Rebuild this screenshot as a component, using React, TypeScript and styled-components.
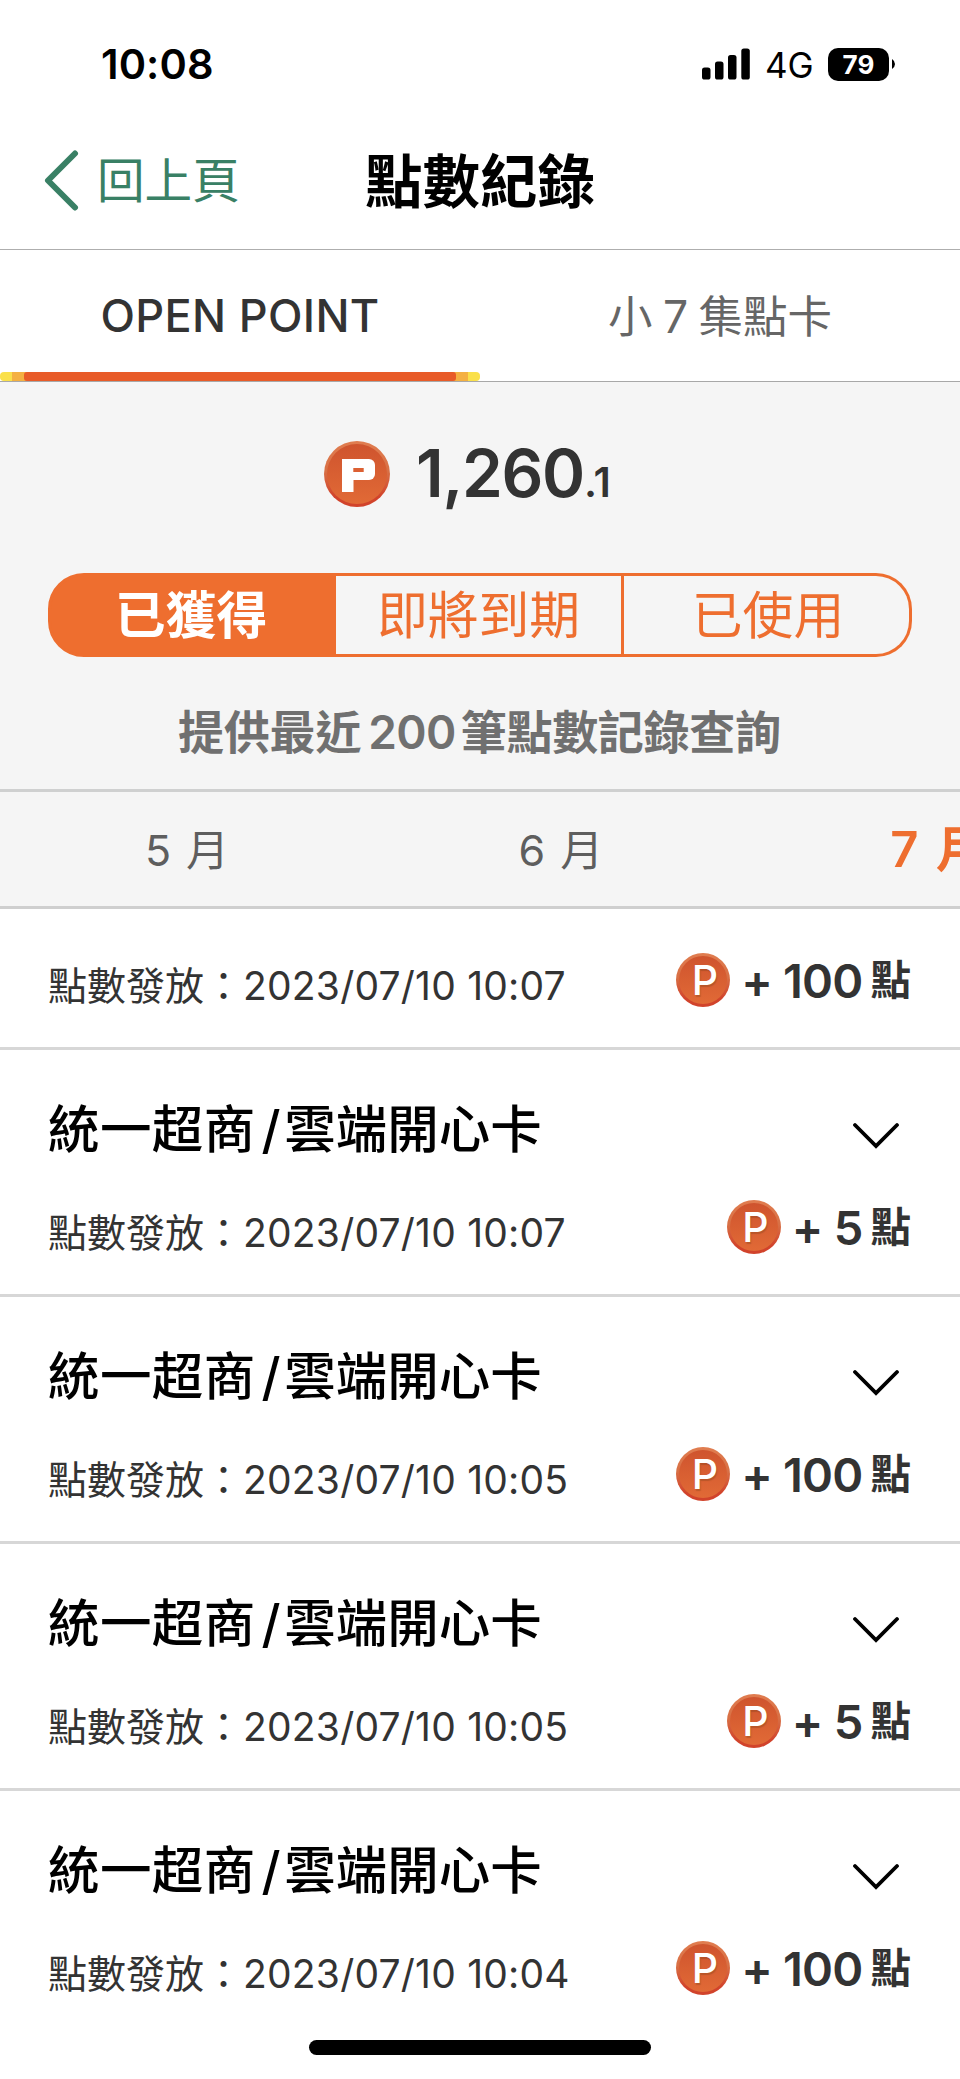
import React from "react";
import styled, { createGlobalStyle } from "styled-components";

const GlobalStyle = createGlobalStyle`
  body { margin: 0; background: #fff; }
  * { box-sizing: border-box; }
`;

const Screen = styled.main`
  display: flex;
  flex-direction: column;
  width: 960px;
  height: 2079px;
  overflow: hidden;
  background: #fff;
  color: #333;
  font-family: Inter, "Noto Sans CJK TC", sans-serif;
  white-space: nowrap;
`;

const Text = styled.span<{ $track?: number; $size?: number; $gap?: number }>`
  letter-spacing: ${(p) => p.$track ?? 0}px;
  margin-left: ${(p) => p.$gap ?? 0}px;
  line-height: 1;
  ${(p) => (p.$size ? `font-size: ${p.$size}px;` : "")}
`;

const StatusBar = styled.div`
  flex: none;
  display: flex;
  justify-content: space-between;
  height: 128px;
  padding: 0 65px 0 101px;
  align-items: center;
  color: #000;
`;

const Clock = styled.time`
  font-size: 41.5px;
  font-weight: 600;
  letter-spacing: 0.1px;
  line-height: 60px;
`;

const StatusIcons = styled.div`
  display: flex;
  align-items: center;
`;

const Network = styled.span`
  width: 63px;
  margin-left: 15px;
  font-size: 35px;
  line-height: 40px;
  padding-top: 2px;
`;

const Battery = styled.div`
  width: 61px;
  height: 33px;
  border-radius: 10px;
  background: #000;
  color: #fff;
  font-size: 26px;
  font-weight: 700;
  line-height: 34px;
  text-align: center;
`;

const Header = styled.header`
  flex: none;
  display: grid;
  grid-template-columns: 1fr auto 1fr;
  align-items: center;
  height: 122px;
  padding: 0 44px 16px;
  border-bottom: 1px solid #aeaeae;
`;

const BackButton = styled.div`
  display: flex;
  align-items: center;
  gap: 17px;
  color: #398065;
  font-size: 47.6px;
  line-height: 62px;
`;

const Title = styled.h1`
  margin: 2px 0 0;
  color: #000;
  font-size: 57.5px;
  font-weight: 700;
  line-height: 70px;
`;

const Tabs = styled.nav`
  flex: none;
  display: flex;
  height: 132px;
  border-bottom: 1px solid #a8a8a8;
`;

const Tab = styled.div<{ $active?: boolean }>`
  flex: 1;
  display: flex;
  flex-direction: column;
  font-size: ${(p) => (p.$active ? 45 : 44.5)}px;
  font-weight: ${(p) => (p.$active ? 500 : 400)};
  letter-spacing: ${(p) => (p.$active ? 0.35 : 0)}px;
  word-spacing: ${(p) => (p.$active ? 0 : -2)}px;
  color: ${(p) => (p.$active ? "#333" : "#666")};
  line-height: ${(p) => (p.$active ? 132 : 134)}px;
  text-align: center;
`;

const TabLabel = styled.span`
  height: 122px;
`;

const Underline = styled.div`
  height: 9px;
  padding: 0 12px;
  border-radius: 4px;
  background: #fae04a;
`;

const UnderlineMid = styled.div`
  height: 9px;
  padding: 0 12px;
  background: #f4b042;
`;

const UnderlineCore = styled.div`
  height: 9px;
  border-radius: 3px;
  background: #e85b28;
`;

const Summary = styled.section`
  flex: none;
  height: 410px;
  background: #f5f5f5;
  border-bottom: 3px solid #cfd0d0;
  display: flex;
  flex-direction: column;
`;

const Balance = styled.div`
  display: flex;
  align-items: center;
  height: 66px;
  margin: 59px 0 66px 324px;
  font-size: 65.5px;
  font-weight: 600;
  line-height: 68px;
`;

const BalanceValue = styled.div`
  margin-left: 26px;
  letter-spacing: -1.3px;
`;

const Segments = styled.div`
  flex: none;
  display: flex;
  height: 84px;
  margin: 0 48px;
`;

const Segment = styled.div<{ $active?: boolean }>`
  width: 288px;
  border: 3px solid #ee6e2f;
  background: ${(p) => (p.$active ? "#ee6e2f" : "transparent")};
  color: ${(p) => (p.$active ? "#fff" : "#ee6e2f")};
  font-size: 50.8px;
  font-weight: ${(p) => (p.$active ? 700 : 400)};
  line-height: 79px;
  text-align: center;
  &:first-child { border-radius: 36px 0 0 36px; padding-right: 2px; }
  &:last-child { border-radius: 0 36px 36px 0; padding-left: 3px; }
  & + & { border-left: 0; }
`;

const Note = styled.p`
  margin: 42px 0 0 178px;
  color: #707070;
  font-size: 46px;
  font-weight: 600;
  line-height: 66px;
`;

const Months = styled.div`
  flex: none;
  display: flex;
  height: 117px;
  background: #f5f5f5;
  border-bottom: 3px solid #cfcfcf;
  overflow: hidden;
`;

const Month = styled.div<{ $active?: boolean }>`
  flex: none;
  width: 374px;
  padding-left: ${(p) => (p.$active ? 5 : 0)}px;
  color: ${(p) => (p.$active ? "#ee6e2f" : "#5e5e5e")};
  font-size: ${(p) => (p.$active ? 49 : 43)}px;
  font-weight: ${(p) => (p.$active ? 600 : 400)};
  word-spacing: ${(p) => (p.$active ? 5 : 3)}px;
  line-height: 116px;
  text-align: center;
`;

const List = styled.ul`
  flex: none;
  margin: 0;
  padding: 6px 0 0;
  list-style: none;
`;

const Row = styled.li`
  padding: 0 48px 35px;
  border-bottom: 3px solid #d7d7d7;
  &:last-child { border-bottom: 0; }
`;

const Heading = styled.div`
  display: flex;
  justify-content: space-between;
  align-items: center;
  height: 112px;
  padding-top: 46px;
  color: #000;
  font-size: 51.5px;
  font-weight: 500;
  line-height: 66px;
`;

const Meta = styled.div`
  display: flex;
  justify-content: space-between;
  height: 97px;
  padding-top: 33px;
`;

const Issued = styled.div`
  padding-top: 6px;
  font-size: 39px;
  line-height: 64px;
`;

const Amount = styled.div`
  display: flex;
  align-items: center;
  padding-right: 1px;
  font-size: 47px;
  font-weight: 600;
  line-height: 64px;
`;

const Unit = styled.span`
  margin-left: 8px;
  padding-top: 2px;
  font-size: 40.5px;
  line-height: 1;
`;

const Coin = styled.div`
  display: flex;
  width: 54px;
  height: 54px;
  padding: 3px;
  border-radius: 50%;
  background: linear-gradient(#e07d50, #d87045 45%, #d1432b 85%);
`;

const CoinFace = styled.div`
  flex: 1;
  padding-left: 12.5px;
  border-radius: 50%;
  background: linear-gradient(#cf542e, #e16a36);
  color: #fff;
  font-size: 41px;
  font-weight: 500;
  line-height: 48px;
  text-shadow: 1px 2px 1px rgba(110, 60, 20, 0.3);
`;

const HomeIndicator = styled.div`
  flex: none;
  width: 342px;
  height: 15px;
  margin: 5px auto 0;
  border-radius: 8px;
  background: #000;
`;

const Signal = () => (
  <svg width="48" height="32" viewBox="0 0 48 32">
    <rect x="0" y="19.5" width="8.5" height="12" rx="2.6" />
    <rect x="13" y="13.5" width="8.5" height="18" rx="2.6" />
    <rect x="26" y="7" width="8.5" height="24.5" rx="2.6" />
    <rect x="39.3" y="0.5" width="8.5" height="31" rx="2.6" />
  </svg>
);

const BatteryTip = () => (
  <svg width="6" height="12" viewBox="0 0 6 12">
    <path d="M3 1 Q6 3 6 6 Q6 9 3 11 Z" />
  </svg>
);

const BackArrow = () => (
  <svg width="36" height="62" viewBox="0 0 36 62" fill="none" stroke="currentColor" strokeWidth="6" strokeLinecap="round" strokeLinejoin="round">
    <path d="M31 3.5 L4 30.5 L31 57.5" />
  </svg>
);

const Chevron = () => (
  <svg width="59" height="52" viewBox="0 0 59 52" fill="none" stroke="#000" strokeWidth="3.8" strokeLinecap="round">
    <path d="M2 22 L23 43 L44 22" />
  </svg>
);

const PointLogo = () => (
  <svg width="66" height="66" viewBox="0 0 66 66">
    <defs>
      <linearGradient id="rim" x1="0" y1="0" x2="0" y2="1">
        <stop offset="0" stopColor="#e07d50" />
        <stop offset="0.45" stopColor="#d87045" />
        <stop offset="0.85" stopColor="#d1432b" />
      </linearGradient>
      <linearGradient id="face" x1="0" y1="0" x2="0" y2="1">
        <stop offset="0" stopColor="#cf542e" />
        <stop offset="1" stopColor="#e16a36" />
      </linearGradient>
    </defs>
    <circle cx="33" cy="33" r="33" fill="url(#rim)" />
    <circle cx="33" cy="33" r="30" fill="url(#face)" />
    <rect x="18" y="18" width="33" height="21" rx="6" fill="#fff" />
    <rect x="18" y="18" width="11.5" height="33" fill="#fff" />
    <rect x="29.3" y="27" width="10.4" height="4" fill="#dc6033" />
  </svg>
);

interface Entry {
  time: string;
  points: number;
  partial?: boolean;
}

const entries: Entry[] = [
  { time: "10:07", points: 100, partial: true },
  { time: "10:07", points: 5 },
  { time: "10:05", points: 100 },
  { time: "10:05", points: 5 },
  { time: "10:04", points: 100 },
];

const HistoryRow = ({ time, points, partial }: Entry) => (
  <Row>
    {!partial && (
      <Heading>
        <div>
          <Text $track={0.4}>統一超商</Text>
          <Text $gap={6} $track={3.5}>/</Text>
          <Text>雲端開心卡</Text>
        </div>
        <Chevron />
      </Heading>
    )}
    <Meta>
      <Issued>
        點數發放：<Text $track={0.22}>2023/07/10 {time}</Text>
      </Issued>
      <Amount>
        <Coin>
          <CoinFace>P</CoinFace>
        </Coin>
        <Text $gap={11} $track={-0.8}>+ {points}</Text>
        <Unit>點</Unit>
      </Amount>
    </Meta>
  </Row>
);

export default function App() {
  return (
    <Screen>
      <GlobalStyle />
      <StatusBar>
        <Clock>10:08</Clock>
        <StatusIcons>
          <Signal />
          <Network>4G</Network>
          <Battery>79</Battery>
          <BatteryTip />
        </StatusIcons>
      </StatusBar>
      <Header>
        <BackButton>
          <BackArrow />
          回上頁
        </BackButton>
        <Title>點數紀錄</Title>
      </Header>
      <Tabs>
        <Tab $active>
          <TabLabel>OPEN POINT</TabLabel>
          <Underline>
            <UnderlineMid>
              <UnderlineCore />
            </UnderlineMid>
          </Underline>
        </Tab>
        <Tab>
          <TabLabel>小 7 集點卡</TabLabel>
        </Tab>
      </Tabs>
      <Summary>
        <Balance>
          <PointLogo />
          <BalanceValue>
            1,260<Text $size={41}>.1</Text>
          </BalanceValue>
        </Balance>
        <Segments>
          <Segment $active>已獲得</Segment>
          <Segment>即將到期</Segment>
          <Segment>已使用</Segment>
        </Segments>
        <Note>
          <Text $track={-0.2}>提供最近</Text>
          <Text $gap={7} $track={-0.6}>200</Text>
          <Text $gap={5} $track={-0.3}>筆點數記錄查詢</Text>
        </Note>
      </Summary>
      <Months>
        <Month>5 月</Month>
        <Month>6 月</Month>
        <Month $active>7 月</Month>
      </Months>
      <List>
        {entries.map((entry, i) => (
          <HistoryRow key={i} {...entry} />
        ))}
      </List>
      <HomeIndicator />
    </Screen>
  );
}
